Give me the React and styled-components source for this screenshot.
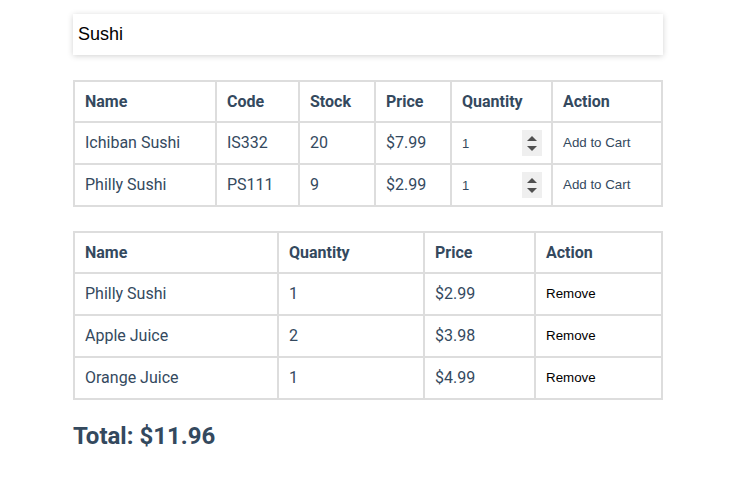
import React from "react";
import styled, { createGlobalStyle } from "styled-components";

const Global = createGlobalStyle`
  html, body { margin: 0; padding: 0; background: #fff; }
  body { font-family: Roboto, "Noto Sans", sans-serif; color: #34495e; }
`;

const Page = styled.div`
  width: 590px;
  margin: 14px 0 0 73px;
  display: flex;
  flex-direction: column;
`;

const Search = styled.input`
  box-sizing: border-box;
  width: 590px;
  height: 41px;
  border: none;
  outline: none;
  padding: 0 5px;
  font-family: "Liberation Sans", Arial, sans-serif;
  font-size: 18px;
  color: #000;
  background: #fff;
  box-shadow: 0 1px 6px rgba(0, 0, 0, 0.18);
`;

const Table = styled.table`
  border-collapse: collapse;
  width: 588px;
  table-layout: fixed;
  margin-top: ${(p) => p.$top}px;
  border: 2px solid #ddd;
`;

const Th = styled.th`
  border: 2px solid #ddd;
  padding: 10px;
  height: 19px;
  text-align: left;
  font-weight: 700;
  font-size: 16px;
  line-height: 19px;
  color: #34495e;
`;

const Td = styled.td`
  border: 2px solid #ddd;
  padding: 10px;
  height: ${(p) => p.$h || 20}px;
  font-size: 16px;
  line-height: 20px;
  color: #34495e;
  white-space: nowrap;
`;

const QtyBox = styled.div`
  display: flex;
  align-items: center;
  height: 20px;
`;

const QtyInput = styled.input`
  flex: 1;
  min-width: 0;
  border: none;
  outline: none;
  padding: 0;
  font-family: "Liberation Sans", Arial, sans-serif;
  font-size: 13px;
  color: #34495e;
  background: transparent;
  -moz-appearance: textfield;
  &::-webkit-inner-spin-button,
  &::-webkit-outer-spin-button {
    -webkit-appearance: none;
    margin: 0;
  }
`;

const Spinner = styled.div`
  flex: none;
  width: 20px;
  height: 26px;
  margin-right: -1px;
  background: #efefef;
  display: flex;
  flex-direction: column;
  align-items: center;
  justify-content: center;
  gap: 5px;
`;

const Arrow = styled.span`
  width: 0;
  height: 0;
  border-left: 5px solid transparent;
  border-right: 5px solid transparent;
  ${(p) =>
    p.$dir === "up"
      ? "border-bottom: 5px solid #505050;"
      : "border-top: 5px solid #505050;"}
`;

const LinkButton = styled.button`
  border: none;
  background: none;
  padding: 0;
  vertical-align: top;
  line-height: 19px;
  cursor: pointer;
  font-family: "Liberation Sans", Arial, sans-serif;
  font-size: 13.333px;
  color: ${(p) => p.$color};
`;

const Total = styled.h2`
  margin: 22px 0 0 0;
  font-size: 24px;
  line-height: 28px;
  font-weight: 700;
  color: #34495e;
`;

const products = [
  { name: "Ichiban Sushi", code: "IS332", stock: 20, price: "$7.99" },
  { name: "Philly Sushi", code: "PS111", stock: 9, price: "$2.99" },
];

const cart = [
  { name: "Philly Sushi", qty: 1, price: "$2.99" },
  { name: "Apple Juice", qty: 2, price: "$3.98" },
  { name: "Orange Juice", qty: 1, price: "$4.99" },
];

function Quantity() {
  return (
    <QtyBox>
      <QtyInput type="number" defaultValue={1} min={1} />
      <Spinner>
        <Arrow $dir="up" />
        <Arrow $dir="down" />
      </Spinner>
    </QtyBox>
  );
}

export default function App() {
  return (
    <>
      <Global />
      <Page>
        <Search defaultValue="Sushi" />
        <Table $top={25}>
          <colgroup>
            <col style={{ width: 142 }} />
            <col style={{ width: 83 }} />
            <col style={{ width: 76 }} />
            <col style={{ width: 76 }} />
            <col style={{ width: 101 }} />
            <col style={{ width: 110 }} />
          </colgroup>
          <thead>
            <tr>
              <Th>Name</Th>
              <Th>Code</Th>
              <Th>Stock</Th>
              <Th>Price</Th>
              <Th>Quantity</Th>
              <Th>Action</Th>
            </tr>
          </thead>
          <tbody>
            {products.map((p) => (
              <tr key={p.code}>
                <Td>{p.name}</Td>
                <Td>{p.code}</Td>
                <Td>{p.stock}</Td>
                <Td>{p.price}</Td>
                <Td>
                  <Quantity />
                </Td>
                <Td>
                  <LinkButton $color="#34495e">Add to Cart</LinkButton>
                </Td>
              </tr>
            ))}
          </tbody>
        </Table>
        <Table $top={24}>
          <colgroup>
            <col style={{ width: 204 }} />
            <col style={{ width: 146 }} />
            <col style={{ width: 111 }} />
            <col style={{ width: 127 }} />
          </colgroup>
          <thead>
            <tr>
              <Th>Name</Th>
              <Th>Quantity</Th>
              <Th>Price</Th>
              <Th>Action</Th>
            </tr>
          </thead>
          <tbody>
            {cart.map((c) => (
              <tr key={c.name}>
                <Td $h={19.5}>{c.name}</Td>
                <Td $h={19.5}>{c.qty}</Td>
                <Td $h={19.5}>{c.price}</Td>
                <Td $h={19.5}>
                  <LinkButton $color="#000">Remove</LinkButton>
                </Td>
              </tr>
            ))}
          </tbody>
        </Table>
        <Total>Total: $11.96</Total>
      </Page>
    </>
  );
}
